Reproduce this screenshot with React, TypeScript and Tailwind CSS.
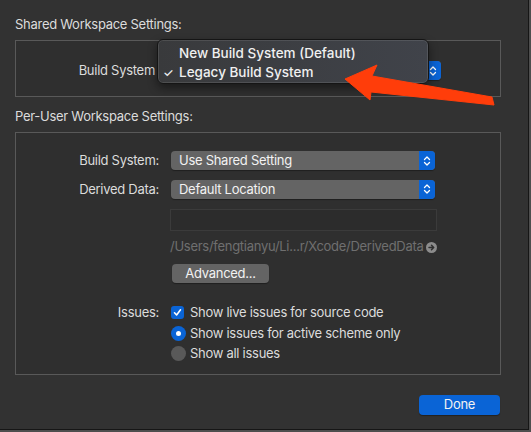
import React from 'react';

const font = { fontFamily: 'Inter, "Noto Sans", sans-serif' };

const Stepper: React.FC = () => (
  <div className="flex h-full w-[16px] items-center justify-center rounded-r-[4px] bg-[#0a64d6]">
    <svg width="8" height="12" viewBox="0 0 8 12" fill="none" stroke="white" strokeWidth="1.3" strokeLinecap="round" strokeLinejoin="round">
      <path d="M1.5 4.5 L4 2 L6.5 4.5" />
      <path d="M1.5 7.5 L4 10 L6.5 7.5" />
    </svg>
  </div>
);

const PopupButton: React.FC<{ label: string; width: string }> = ({ label, width }) => (
  <div className={`flex h-[19px] ${width} items-stretch rounded-[4px] bg-[#646464] shadow-[0_1px_1px_rgba(0,0,0,0.35)]`}>
    <div className="flex flex-1 items-center pl-[8px] text-[13px] text-[#f2f2f2]">{label}</div>
    <Stepper />
  </div>
);

export default function App() {
  return (
    <div className="h-[432px] w-[531px] overflow-hidden bg-[#4e4e4e]" style={font}>
      <div className="relative h-[430px] w-[529px] border-b border-r border-[#161616] bg-[#323232] px-[15px] pt-[16px] text-[13px] tracking-[-0.28px] text-[#dcdcdc]">
        <div className="h-[16px] leading-[16px]">Shared Workspace Settings:</div>

        <div className="mt-[8px] h-[57px] w-[486px] border border-[#595959] bg-[#2f2f2f]">
          <div className="mt-[20px] grid grid-cols-[143px_1fr] items-center gap-x-[12px]">
            <div className="pr-[4px] text-right">Build System</div>
            {/* popup sits under the open menu */}
            <PopupButton label="" width="w-[270px]" />
          </div>
        </div>

        <div className="mt-[11px] h-[16px] leading-[16px]">Per-User Workspace Settings:</div>

        <div className="mt-[8px] h-[243px] w-[486px] border border-[#595959] bg-[#2f2f2f] pt-[18px]">
          <div className="grid grid-cols-[143px_1fr] items-center gap-x-[12px]">
            <div className="text-right">Build System:</div>
            <PopupButton label="Use Shared Setting" width="w-[264px]" />
          </div>
          <div className="mt-[9px] grid grid-cols-[143px_1fr] items-center gap-x-[12px]">
            <div className="text-right">Derived Data:</div>
            <PopupButton label="Default Location" width="w-[264px]" />
          </div>
          <div className="ml-[154px] mt-[10px] h-[22px] w-[267px] border border-[#3b3b3b] bg-[#2c2c2c]" />
          <div className="ml-[154px] mt-[8px] flex h-[16px] w-[267px] items-center justify-between text-[#6f6f6f]">
            <span>/Users/fengtianyu/Li...r/Xcode/DerivedData</span>
            <svg width="11" height="11" viewBox="0 0 11 11">
              <circle cx="5.5" cy="5.5" r="5.5" fill="#8c8c8c" />
              <path d="M3 5.5 H7.5 M5.5 3.3 L7.7 5.5 L5.5 7.7" stroke="#2f2f2f" strokeWidth="1.5" fill="none" strokeLinecap="round" strokeLinejoin="round" />
            </svg>
          </div>
          <div className="ml-[156px] mt-[9px] flex h-[19px] w-[97px] items-center justify-center rounded-[4px] bg-[#646464] text-[#f2f2f2] shadow-[0_1px_1px_rgba(0,0,0,0.35)]">
            Advanced...
          </div>

          <div className="mt-[20px] grid grid-cols-[143px_1fr] items-center gap-x-[12px]">
            <div className="text-right">Issues:</div>
            <div className="flex items-center gap-[6px]">
              <div className="flex h-[13px] w-[13px] items-center justify-center rounded-[3px] bg-[#0a64d6]">
                <svg width="9" height="9" viewBox="0 0 9 9" fill="none" stroke="white" strokeWidth="1.6" strokeLinecap="round" strokeLinejoin="round">
                  <path d="M1.5 4.8 L3.6 7 L7.5 1.8" />
                </svg>
              </div>
              <span>Show live issues for source code</span>
            </div>
          </div>
          <div className="ml-[155px] mt-[3px] flex h-[16px] items-center gap-[4px]">
            <div className="flex h-[15px] w-[15px] items-center justify-center rounded-full bg-[#0a64d6]">
              <div className="h-[5px] w-[5px] rounded-full bg-white" />
            </div>
            <span>Show issues for active scheme only</span>
          </div>
          <div className="ml-[155px] mt-[4px] flex h-[16px] items-center gap-[4px]">
            <div className="h-[15px] w-[15px] rounded-full bg-[#595959]" />
            <span>Show all issues</span>
          </div>
        </div>

        <div className="mt-[20px] flex justify-end pr-[13px]">
          <div className="flex h-[20px] w-[81px] items-center justify-center rounded-[4px] bg-[#0a64d6] text-[#f2f2f2] shadow-[0_1px_1px_rgba(0,0,0,0.35)]">
            Done
          </div>
        </div>

        {/* open popup menu */}
        <div className="absolute left-[157px] top-[39px] h-[45px] w-[272px] rounded-[6px] border border-[#151515] bg-gradient-to-r from-[#393a3c] to-[#40434a] pt-[4px] tracking-normal shadow-[0_4px_10px_rgba(0,0,0,0.45),inset_0_0_0_1px_rgba(255,255,255,0.1)]">
          <div className="flex h-[19px] items-center pl-[21px] text-[13.5px] font-medium text-[#f0f0f0]">New Build System (Default)</div>
          <div className="flex h-[19px] items-center text-[13.5px] font-medium text-[#f0f0f0]">
            <span className="w-[21px] pl-[5px] text-[12px]">✓</span>
            <span>Legacy Build System</span>
          </div>
        </div>

        {/* annotation arrow */}
        <svg className="absolute left-0 top-0" width="529" height="430" viewBox="0 0 529 430">
          <polygon points="345,79 377,65 372,76 492,97 494,105 371,92 370,100" fill="#ff3d0a" stroke="#ff3d0a" strokeWidth="1" strokeLinejoin="round" />
        </svg>
      </div>
    </div>
  );
}
